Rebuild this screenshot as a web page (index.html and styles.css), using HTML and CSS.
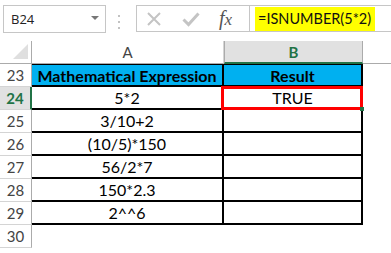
FILE: index.html
```html
<!DOCTYPE html>
<html>
<head>
<meta charset="utf-8">
<link rel="stylesheet" href="styles.css">
</head>
<body>
<div class="toolbar">
  <div class="namebox"><span class="ref">B24</span><span class="caret"></span></div>
  <div class="grip"><i></i><i></i><i></i></div>
  <div class="fbuttons">
    <svg class="icon-x" width="16" height="16" viewBox="0 0 16 16"><path d="M2 2 L14 14 M14 2 L2 14" stroke="#c4c4c4" stroke-width="2" fill="none"/></svg>
    <svg class="icon-check" width="18" height="16" viewBox="0 0 18 16"><path d="M1.5 8.5 L6.5 13.5 L16.5 2.5" stroke="#c4c4c4" stroke-width="3" fill="none"/></svg>
    <span class="fx"><i>f</i><i>x</i></span>
  </div>
  <div class="formula"><span class="hl">=ISNUMBER(5*2)</span></div>
</div>
<div class="sheet">
  <div class="corner"><span class="tri"></span></div>
  <div class="colh">A</div>
  <div class="colh sel">B</div>
  <div class="colh rest"></div>

  <div class="rh">23</div>
  <div class="c t th">Mathematical Expression</div>
  <div class="c t th">Result</div>
  <div class="c"></div>

  <div class="rh sel">24</div>
  <div class="c t">5*2</div>
  <div class="c t active">TRUE<span class="handle"></span></div>
  <div class="c"></div>

  <div class="rh">25</div>
  <div class="c t">3/10+2</div>
  <div class="c t"></div>
  <div class="c"></div>

  <div class="rh">26</div>
  <div class="c t">(10/5)*150</div>
  <div class="c t"></div>
  <div class="c"></div>

  <div class="rh">27</div>
  <div class="c t">56/2*7</div>
  <div class="c t"></div>
  <div class="c"></div>

  <div class="rh">28</div>
  <div class="c t">150*2.3</div>
  <div class="c t"></div>
  <div class="c"></div>

  <div class="rh">29</div>
  <div class="c t">2^^6</div>
  <div class="c t"></div>
  <div class="c"></div>

  <div class="rh">30</div>
  <div class="c"></div>
  <div class="c"></div>
  <div class="c"></div>
</div>
</body>
</html>
```
FILE: styles.css
```css
* { box-sizing: border-box; }
html, body { margin: 0; padding: 0; background: #fff; }
body { width: 391px; height: 253px; overflow: hidden; font-family: "Lato", "Liberation Sans", sans-serif; }

.toolbar { display: flex; align-items: flex-start; height: 41px; padding-top: 5px; }
.namebox {
  margin-left: 3px; width: 103px; height: 28px; border: 1px solid #c6c6c6;
  display: flex; align-items: center; justify-content: space-between;
  padding: 0 6px 0 7px;
}
.ref { font-family: "Open Sans", "Noto Sans", sans-serif; font-size: 13px; color: #222; }
.caret { width: 0; height: 0; border-left: 4px solid transparent; border-right: 4px solid transparent; border-top: 4px solid #777; margin-top: -3px; }
.grip { margin-left: 12px; width: 3px; padding-top: 10px; display: flex; flex-direction: column; gap: 4px; }
.grip i { display: block; width: 2px; height: 2px; background: #c2c2c2; }
.fbuttons {
  margin-left: 15px; width: 113px; height: 27px; border: 1px solid #c6c6c6; border-right: none;
  display: flex; align-items: center; padding-left: 8px;
}
.icon-x { margin-left: 1px; }
.icon-check { margin-left: 20px; }
.fx { margin-left: 19px; font-family: "Liberation Serif", "DejaVu Serif", serif; font-size: 20px; color: #555; }
.fx i:last-child { font-size: 17px; }
.formula {
  flex: 1; height: 27px; border: 1px solid #c6c6c6; border-right: none;
  display: flex; align-items: center; padding-left: 5px;
}
.hl { background: #ffff00; font-family: "Lato", sans-serif; font-size: 14.5px; line-height: 18px; color: #111; padding: 3px 4px 3px 3px; }

.sheet { display: grid; grid-template-columns: 32px 192px 139px 1fr; grid-template-rows: 23px repeat(8, 23px); }
.corner { border-right: 1px solid #ababab; border-bottom: 1px solid #ababab; display: flex; align-items: flex-end; justify-content: flex-end; padding: 0 3px 4px 0; }
.tri { width: 0; height: 0; border-left: 15px solid transparent; border-bottom: 15px solid #dfdfdf; }
.colh { border-bottom: 1px solid #ababab; border-right: 1px solid #d4d4d4; display: flex; align-items: center; justify-content: center; font-size: 15px; color: #444; }
.colh.sel { background: #e1e1e1; color: #217346; font-weight: bold; border-bottom: 2px solid #217346; border-right: 1px solid #ababab; border-left: 1px solid #ababab; }
.colh.rest { border-right: none; }

.rh { border-right: 1px solid #ababab; border-bottom: 1px solid #d4d4d4; display: flex; align-items: center; justify-content: center; font-size: 15px; color: #444; }
.rh.sel { background: #e1e1e1; color: #217346; font-weight: bold; border-right: 2px solid #217346; }

.c { display: flex; align-items: center; justify-content: center; font-size: 16px; color: #000; position: relative; }
.t { border-right: 2px solid #000; border-bottom: 2px solid #000; }
.th { background: #00b0f0; font-weight: bold; border-top: 1px solid #000; }
.active::after { content: ""; position: absolute; left: -3px; top: -1px; right: -2px; bottom: -2px; border: 3px solid #ff0000; }
.handle { position: absolute; right: -3px; bottom: -3px; width: 4px; height: 4px; background: #217346; z-index: 2; }
```
